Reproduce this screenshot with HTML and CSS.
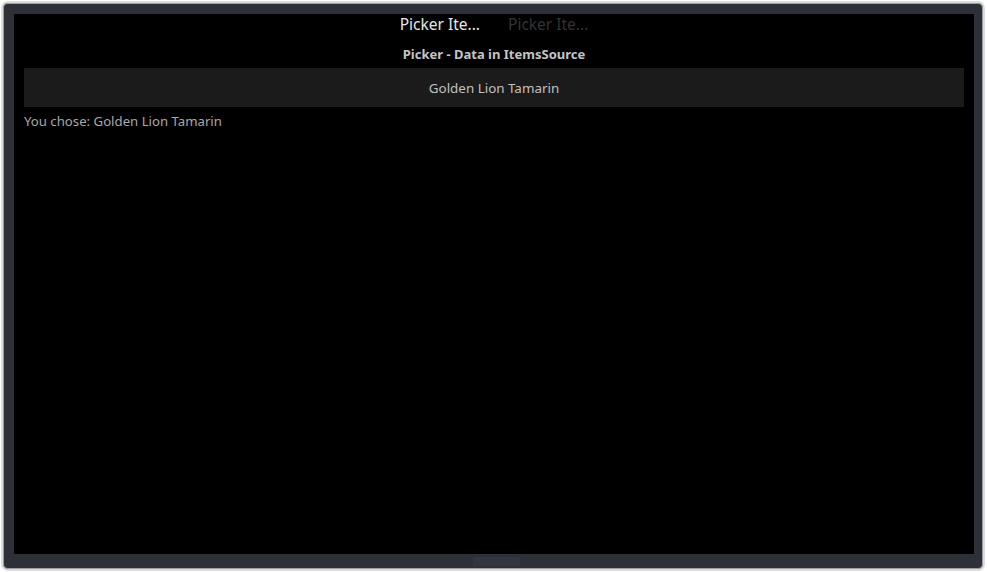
FILE: index.html
```html
<!DOCTYPE html>
<html>
<head>
<meta charset="utf-8">
<link rel="stylesheet" href="styles.css">
</head>
<body>
<div class="device">
  <div class="screen">
    <div class="tabs">
      <span class="tab active">Picker Ite...</span>
      <span class="tab">Picker Ite...</span>
    </div>
    <div class="title">Picker - Data in ItemsSource</div>
    <div class="picker">Golden Lion Tamarin</div>
    <div class="result">You chose: Golden Lion Tamarin</div>
  </div>
  <div class="home"></div>
</div>
</body>
</html>
```
FILE: styles.css
```css
html, body {
  margin: 0;
  padding: 0;
  background: #ffffff;
}
body {
  padding: 1px 2px 1px 1px;
  font-family: "Noto Sans", sans-serif;
}
.device {
  box-sizing: border-box;
  width: 984px;
  height: 570px;
  border: 2px solid #dcdcdc;
  box-shadow: inset 0 0 0 1px #9c9c9c;
  border-radius: 7px;
  background: #2e3038;
  padding: 11px 9px 15px 11px;
  position: relative;
  display: flex;
  flex-direction: column;
}
.screen {
  flex: 1;
  background: #000;
  padding: 0 10px;
  display: flex;
  flex-direction: column;
}
.tabs {
  display: flex;
  justify-content: center;
  gap: 28px;
  height: 20px;
  align-items: center;
  font-size: 15.5px;
}
.tab {
  color: #333333;
}
.tab.active {
  color: #e6e6e6;
}
.title {
  text-align: center;
  font-weight: bold;
  font-size: 13px;
  color: #c4c4c4;
  height: 20px;
  line-height: 20px;
  margin-top: 10px;
}
.picker {
  margin-top: 4px;
  height: 39px;
  background: #1b1b1b;
  color: #c0c0c0;
  font-size: 13.4px;
  display: flex;
  align-items: center;
  justify-content: center;
}
.result {
  margin-top: 5px;
  font-size: 13.2px;
  color: #a8a8a8;
  line-height: 18px;
}
.home {
  position: absolute;
  left: 470px;
  bottom: 3px;
  width: 47px;
  height: 9px;
  background: #33363f;
}
```
